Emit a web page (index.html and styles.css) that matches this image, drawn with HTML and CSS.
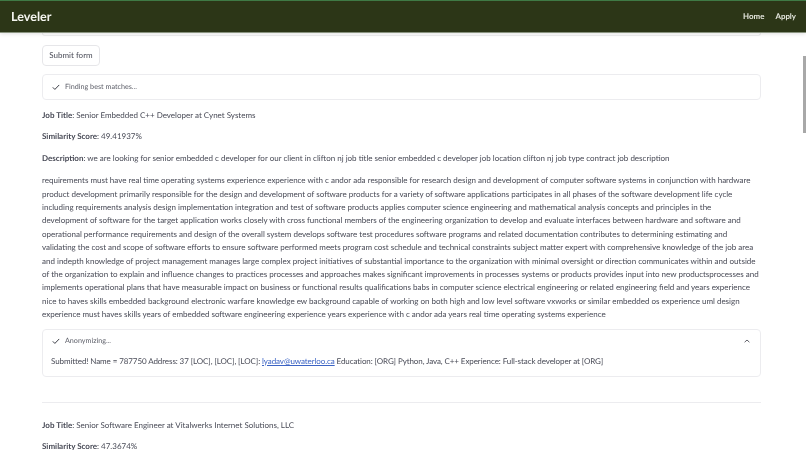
FILE: index.html
```html
<!DOCTYPE html>
<html lang="en">
<head>
<meta charset="utf-8">
<title>Leveler</title>
<link rel="stylesheet" href="styles.css">
</head>
<body>
<header class="topbar">
  <span class="brand">Leveler</span>
  <nav class="nav"><a>Home</a><a>Apply</a></nav>
</header>
<div class="scrollbar"></div>
<main class="main">
  <div class="form-stub"></div>
  <button class="btn">Submit form</button>
  <div class="status">
    <div class="status-head">
      <svg class="check" viewBox="0 0 10 8"><path d="M1 4.2 3.6 6.8 9 1.2"/></svg>
      <span>Finding best matches...</span>
    </div>
  </div>
  <p class="para"><b>Job Title</b>: Senior Embedded C++ Developer at Cynet Systems</p>
  <p class="para"><b>Similarity Score</b>: 49.41937%</p>
  <p class="para"><b>Description</b>: we are looking for senior embedded c developer for our client in clifton nj job title senior embedded c developer job location clifton nj job type contract job description</p>
  <p class="para body-text">
    <span>requirements must have real time operating systems experience experience with c andor ada responsible for research design and development of computer software systems in conjunction with hardware</span>
    <span>product development primarily responsible for the design and development of software products for a variety of software applications participates in all phases of the software development life cycle</span>
    <span>including requirements analysis design implementation integration and test of software products applies computer science engineering and mathematical analysis concepts and principles in the</span>
    <span>development of software for the target application works closely with cross functional members of the engineering organization to develop and evaluate interfaces between hardware and software and</span>
    <span>operational performance requirements and design of the overall system develops software test procedures software programs and related documentation contributes to determining estimating and</span>
    <span>validating the cost and scope of software efforts to ensure software performed meets program cost schedule and technical constraints subject matter expert with comprehensive knowledge of the job area</span>
    <span>and indepth knowledge of project management manages large complex project initiatives of substantial importance to the organization with minimal oversight or direction communicates within and outside</span>
    <span>of the organization to explain and influence changes to practices processes and approaches makes significant improvements in processes systems or products provides input into new productsprocesses and</span>
    <span>implements operational plans that have measurable impact on business or functional results qualifications babs in computer science electrical engineering or related engineering field and years experience</span>
    <span>nice to haves skills embedded background electronic warfare knowledge ew background capable of working on both high and low level software vxworks or similar embedded os experience uml design</span>
    <span>experience must haves skills years of embedded software engineering experience years experience with c andor ada years real time operating systems experience</span>
  </p>
  <div class="status status-open">
    <div class="status-head">
      <svg class="check" viewBox="0 0 10 8"><path d="M1 4.2 3.6 6.8 9 1.2"/></svg>
      <span>Anonymizing...</span>
      <svg class="chev" viewBox="0 0 10 6"><path d="M1 5 5 1.4 9 5"/></svg>
    </div>
    <p class="status-body">Submitted! Name = 787750 Address: 37 [LOC], [LOC], [LOC]: <a class="mail">lyadav@uwaterloo.ca</a> Education: [ORG] Python, Java, C++ Experience: Full-stack developer at [ORG]</p>
  </div>
  <hr class="rule">
  <p class="para"><b>Job Title</b>: Senior Software Engineer at Vitalwerks Internet Solutions, LLC</p>
  <p class="para"><b>Similarity Score</b>: 47.3674%</p>
</main>
</body>
</html>
```
FILE: styles.css
```css
* { box-sizing: border-box; }
html, body { margin: 0; height: 450px; overflow: hidden; background: #fff; }
body {
  font-family: "Lato", "Noto Sans", sans-serif; font-size: 8px; line-height: 13.4px; color: #484a56;
  text-rendering: geometricPrecision;
}
.topbar {
  position: relative; z-index: 2; height: 33px; padding: 0 10px 0 11px;
  display: flex; align-items: center; justify-content: space-between;
  background: #2c3617; border-top: 1px solid #3f7a45; border-bottom: 1px solid #8a9480;
  box-shadow: 0 1px 4px rgba(0,0,0,.12);
}
.brand { font-size: 12.6px; font-weight: 700; color: #f4f5ef; filter: blur(.2px); }
.nav { display: flex; gap: 11px; font-size: 7.9px; font-weight: 700; color: #e6e8df; filter: blur(.2px); }
.scrollbar { position: absolute; z-index: 3; top: 56px; right: 0; width: 3px; height: 77px; background: #a8a8a8; }
.main { padding: 0 45px 0 42px; filter: blur(.25px); }
.form-stub { height: 3px; margin-bottom: 9px; border: 1px solid #eeeef0; border-top: 0; border-radius: 0 0 4px 4px; }
.btn {
  display: block; width: 58px; height: 21px; padding: 0; margin-bottom: 8px;
  font: inherit; color: #484a56; background: transparent; border: 1px solid #e6e6e9; border-radius: 4px;
}
.status { border: 1px solid #ececef; border-radius: 4px; margin-bottom: 9px; }
.status-head { display: flex; align-items: center; height: 24px; padding: 0 9px; font-size: 7.2px; color: #5c5e68; }
.check { width: 8px; height: 6.4px; margin-right: 5px; flex: none; fill: none; stroke: #33353f; stroke-width: 1.2; }
.chev { width: 6px; height: 4px; margin-left: auto; margin-right: 1px; flex: none; fill: none; stroke: #33353f; stroke-width: 1.3; }
.para { margin: 0 0 8px; white-space: nowrap; }
.para b { font-weight: 700; }
.body-text { margin-top: 9px; }
.body-text span { display: block; }
.status-open { margin-top: -1px; height: 48px; }
.status-open .status-head { height: 23px; }
.status-body { margin: 0; padding: 2px 8px 0; white-space: nowrap; letter-spacing: -.09px; }
.mail { color: #3b63c4; text-decoration: underline; }
.rule { margin: 25px 0 16px; border: 0; border-top: 1px solid #ececef; }
```
